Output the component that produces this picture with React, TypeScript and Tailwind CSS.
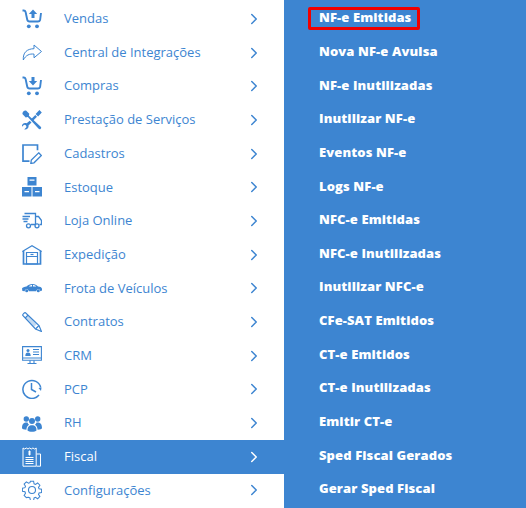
import React from 'react';
import { ChevronRight } from 'lucide-react';

const Cart = ({ dir }: { dir: 'up' | 'down' }) => (
  <svg viewBox="0 0 20 20" className="w-5 h-5" fill="none" stroke="currentColor" strokeWidth="1.900">
    <path d="M.5 1.500h1.300c1 0 1.500.5 1.800 1.500l1.600 7.500c.3 1.400 1 2 2.300 2h8.500c1.200 0 1.800-.5 2.100-1.500L19 4" />
    <circle cx="6.800" cy="17.300" r="1.900" fill="currentColor" stroke="none" />
    <circle cx="15" cy="17.300" r="1.900" fill="currentColor" stroke="none" />
    {dir === 'up' ? (
      <path d="M11 .5L6.800 4.900h2.700v4h3v-4h2.700z" fill="currentColor" stroke="none" />
    ) : (
      <path d="M11 9.500L6.800 5.100h2.700v-4h3v4h2.700z" fill="currentColor" stroke="none" />
    )}
  </svg>
);

const Share = () => (
  <svg viewBox="0 0 20 20" className="w-5 h-5" fill="none" stroke="currentColor" strokeWidth="1">
    <path d="M12 2l7.500 6.500-7.500 6.300v-3.700c-4.500-.5-8 .9-10.700 5.900C.8 9.500 5 5.800 12 5.700z" />
  </svg>
);

const Tools = () => (
  <svg viewBox="0 0 20 20" className="w-5 h-5" fill="currentColor">
    <path d="M4 .5l3.300 3.300-.4 2 11.600 10.700c1 1 .9 1.700.2 2.300-.7.700-1.500.7-2.300-.2L5.800 7 3.700 7.400.4 4.100C.2 2 2 .3 4 .5z" />
    <path d="M19.800 2.500l-3.700 3.900-2.500-2.500L17.400.1zM13.300 5l1.700 1.700-4 4.100-1.700-1.700zM7.700 10.700l1.800 1.800-3 3c.5 2.300-1.300 4.300-3.700 4l-.6-.1 2.300-2.400-.6-1.800-1.800-.5-2.200 2.200C-.3 13.900 2 12 4.700 13.300z" />
  </svg>
);

const Note = () => (
  <svg viewBox="0 0 20 20" className="w-5 h-5" fill="none" stroke="currentColor" strokeWidth="1.700">
    <path d="M15.500 6.300V1H1v16.200h6.500" />
    <path d="M16.700 8.800l2.700 2.700-7.400 7.300-3.200.7.500-3.400z" strokeWidth="1.300" />
  </svg>
);

const Boxes = () => (
  <svg viewBox="0 0 20 20" className="w-5 h-5" fill="currentColor">
    <path fillRule="evenodd" d="M5.500 0h9v8.500h-9zM7.500 2.500v1.200h5V2.500z" />
    <path fillRule="evenodd" d="M0 10h9.500v9.500H0zM2.500 14v1.200h4.500V14z" />
    <path fillRule="evenodd" d="M10.500 10H20v9.500h-9.500zM13 14v1.200h4.500V14z" />
  </svg>
);

const Truck = () => (
  <svg viewBox="0 0 20 20" className="w-5 h-5" fill="none" stroke="currentColor" strokeWidth="1.300">
    <path d="M2.500 2.500h11v11H9M13.500 5.500h3l3 4v4h-2M13.500 13.500h-.5" />
    <path d="M.5 5.500h7.500M.5 8h6M1.500 10.500h4" />
    <circle cx="6.500" cy="14.800" r="2" />
    <circle cx="15" cy="14.800" r="2" />
  </svg>
);

const Garage = () => (
  <svg viewBox="0 0 20 20" className="w-5 h-5" fill="none" stroke="currentColor" strokeWidth="1.200">
    <path d="M.3 6.500L10 .8l9.700 5.700" />
    <path d="M1.500 6v13h17V6" strokeWidth="1.700" />
    <path d="M4.500 7.500h11V19h-11zM4.500 11.500h11" />
    <path d="M8.500 9.500h3" />
  </svg>
);

const Car = () => (
  <svg viewBox="0 0 20 20" className="w-5 h-5" fill="currentColor">
    <path fillRule="evenodd" d="M0 10.500c.5-1.200 2.500-1.800 4.500-2.100C6 7 7.800 6 10.500 6c2.500 0 4 1 5.500 2.500 2 .2 3.600.7 4 2.200v1.800l-1.700.8c-.2-2.600-3.700-2.600-4 0H6.700c-.3-2.600-3.700-2.600-4 0L.4 13zM7 8.500h3V7c-1.400 0-2.400.5-3 1.500zM11 7v1.500h3.300C13.500 7.500 12.400 7 11 7z" />
    <circle cx="4.700" cy="12.800" r="1.500" />
    <circle cx="16.300" cy="12.800" r="1.500" />
  </svg>
);

const Pencil = () => (
  <svg viewBox="0 0 20 20" className="w-5 h-5" fill="none" stroke="currentColor" strokeWidth="1.200">
    <path d="M.8 3.500C.3 2.500 2.500.3 3.500.8L17 13.500l2.500 6-6-2.500z" />
    <path d="M3.200 6L6 3.200M13.500 17l3.500-3.500" />
    <path d="M6 3.200l9 8.800-2.800 2.800-9-8.800z" fill="currentColor" fillOpacity=".3" stroke="none" />
  </svg>
);

const Monitor = () => (
  <svg viewBox="0 0 20 20" className="w-5 h-5" fill="none" stroke="currentColor" strokeWidth="1.100">
    <path d="M.6.600h18.800v13.600H.6zM.6 12h18.800" />
    <path d="M8 14.500v2.500M12 14.500v2.500M5.500 17.500h9" />
    <circle cx="6" cy="4.500" r="1.500" fill="currentColor" stroke="none" />
    <path d="M3.300 10c0-2.500 1-3.500 2.700-3.500s2.700 1 2.700 3.500z" fill="currentColor" stroke="none" />
    <path d="M11 3.500h6M11 6h6M11 8.500h6" />
  </svg>
);

const Clock = () => (
  <svg viewBox="0 0 20 20" className="w-5 h-5" fill="none" stroke="currentColor" strokeWidth="1.500">
    <path d="M18.700 8.500A9 9 0 1 0 17 16" />
    <path d="M9.500 4v6.500l4.500 2.500" />
    <path d="M16.500 9l3-.5-.5 3.500z" fill="currentColor" stroke="none" />
  </svg>
);

const People = () => (
  <svg viewBox="0 0 20 20" className="w-5 h-5" fill="currentColor">
    <circle cx="4.300" cy="6" r="2.700" />
    <circle cx="15.700" cy="6" r="2.700" />
    <circle cx="10" cy="8" r="3" />
    <path d="M0 15c0-4.500 2-5.800 5.500-5.500.3 1 .8 1.700 1.500 2.200-1.700 1-2.500 2.800-2.600 5C2 16.500 0 16 0 15zM20 15c0-4.500-2-5.800-5.500-5.500-.3 1-.8 1.700-1.500 2.200 1.700 1 2.500 2.800 2.600 5 2.400-.2 4.400-.7 4.400-1.700z" />
    <path d="M5.500 17.500c0-3.800 1.500-5.300 4.500-5.300s4.500 1.500 4.500 5.300c-1.500 1.700-7.500 1.700-9 0z" />
  </svg>
);

const Receipt = () => (
  <svg viewBox="0 0 20 20" className="w-5 h-5" fill="none" stroke="currentColor" strokeWidth="1">
    <path d="M1 1l1.700 1 1.600-1 1.700 1 1.600-1 1.700 1 1.600-1 1.700 1 1.600-1v18.200H1z" />
    <path d="M14.500 7h4v12.200h-4" />
    <path d="M7.500 3.500v5M6 5h3M6 7h3M3.500 10.500h8M3.500 12.500h8M3.500 14.500h8M3.500 16.500h8" />
  </svg>
);

const Gear = () => (
  <svg viewBox="0 0 20 20" className="w-5 h-5" fill="none" stroke="currentColor" strokeWidth="1.100">
    <circle cx="10" cy="10" r="3.500" />
    <path d="M8.300.7h3.400l.5 2.700 1.500.6 2.300-1.500 2.400 2.400-1.500 2.300.6 1.500 2.700.5v3.400l-2.700.5-.6 1.500 1.500 2.300-2.400 2.400-2.300-1.500-1.500.6-.5 2.700H8.300l-.5-2.700-1.500-.6L4 18.100 1.600 15.700l1.500-2.300-.6-1.500-2.700-.5V8l2.700-.5.6-1.500L1.600 3.700 4 1.300 6.300 2.800l1.500-.6z" transform="translate(10 10) scale(.94) translate(-10 -10)" />
  </svg>
);

const MENU: { label: string; icon: React.ReactNode; active?: boolean }[] = [
  { label: 'Vendas', icon: <Cart dir="up" /> },
  { label: 'Central de Integrações', icon: <Share /> },
  { label: 'Compras', icon: <Cart dir="down" /> },
  { label: 'Prestação de Serviços', icon: <Tools /> },
  { label: 'Cadastros', icon: <Note /> },
  { label: 'Estoque', icon: <Boxes /> },
  { label: 'Loja Online', icon: <Truck /> },
  { label: 'Expedição', icon: <Garage /> },
  { label: 'Frota de Veículos', icon: <Car /> },
  { label: 'Contratos', icon: <Pencil /> },
  { label: 'CRM', icon: <Monitor /> },
  { label: 'PCP', icon: <Clock /> },
  { label: 'RH', icon: <People /> },
  { label: 'Fiscal', icon: <Receipt />, active: true },
  { label: 'Configurações', icon: <Gear /> },
];

const SUBMENU = [
  'NF-e Emitidas', 'Nova NF-e Avulsa', 'NF-e Inutilizadas', 'Inutilizar NF-e', 'Eventos NF-e',
  'Logs NF-e', 'NFC-e Emitidas', 'NFC-e Inutilizadas', 'Inutilizar NFC-e', 'CFe-SAT Emitidos',
  'CT-e Emitidos', 'CT-e Inutilizadas', 'Emitir CT-e', 'Sped Fiscal Gerados', 'Gerar Sped Fiscal',
];

export default function App() {
  return (
    <div className="flex w-[526px] h-[508px] overflow-hidden bg-white font-['Open_Sans',sans-serif] text-[13px]">
      {/* left menu */}
      <ul className="w-[284px] shrink-0 pt-[2px]">
        {MENU.map((item) => (
          <li
            key={item.label}
            className={`h-[33.7px] flex items-center pl-[22px] pr-[21px] ${item.active ? 'bg-[#3d85d1] text-white' : 'text-[#3d85d1]'}`}
          >
            <span className="w-5 shrink-0">{item.icon}</span>
            <span className="ml-[22px] flex-1">{item.label}</span>
            <ChevronRight className="w-[18px] h-[18px]" strokeWidth={2} />
          </li>
        ))}
      </ul>

      {/* fiscal submenu */}
      <ul className="flex-1 bg-[#3d85d1] pt-[1.3px] pl-[35px] font-extrabold tracking-[0.1px] text-white">
        {SUBMENU.map((label, i) => (
          <li key={label} className="relative h-[33.65px] flex items-center">
            {label}
            {i === 0 && (
              <span className="absolute left-[-11px] top-[6px] w-[112px] h-[23px] border-[3px] border-[#f00000] rounded-[2px]" />
            )}
          </li>
        ))}
      </ul>
    </div>
  );
}
